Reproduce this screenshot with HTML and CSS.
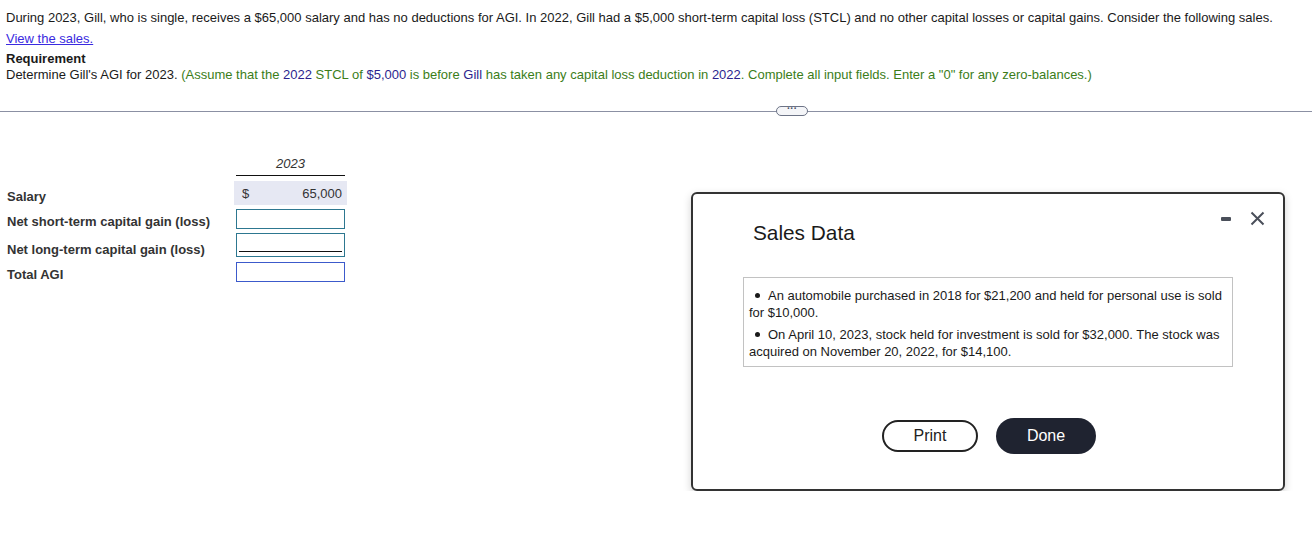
FILE: index.html
```html
<!DOCTYPE html>
<html>
<head>
<meta charset="utf-8">
<link rel="stylesheet" href="styles.css">
</head>
<body>
<div class="question">
  <p class="intro">During 2023, Gill, who is single, receives a $65,000 salary and has no deductions for AGI. In 2022, Gill had a $5,000 short-term capital loss (STCL) and no other capital losses or capital gains. Consider the following sales.</p>
  <p class="link-line"><a class="link" href="#">View the sales.</a></p>
  <p class="req-title">Requirement</p>
  <p class="req">Determine Gill's AGI for 2023. <span class="hint">(Assume that the <span class="num">2022</span> STCL of <span class="num">$5,000</span> is before <span class="num">Gill</span> has taken any capital loss deduction in <span class="num">2022</span>. Complete all input fields. Enter a "0" for any zero-balances.)</span></p>
</div>
<div class="divider">
  <span class="pill">&middot;&middot;&middot;</span>
</div>
<div class="work">
  <div class="table">
    <div class="row head">
      <div class="label"></div>
      <div class="cell year">2023</div>
    </div>
    <div class="row salary">
      <div class="label">Salary</div>
      <div class="cell given"><span>$</span><span>65,000</span></div>
    </div>
    <div class="row r-st">
      <div class="label">Net short-term capital gain (loss)</div>
      <div class="cell"><div class="input teal"></div></div>
    </div>
    <div class="row r-lt">
      <div class="label">Net long-term capital gain (loss)</div>
      <div class="cell"><div class="input teal under"></div></div>
    </div>
    <div class="row r-tot">
      <div class="label">Total AGI</div>
      <div class="cell"><div class="input blue"></div></div>
    </div>
  </div>
  <div class="modal">
    <div class="modal-ctrls">
      <span class="minimize"></span>
      <svg class="close" width="15" height="15" viewBox="0 0 15 15"><path d="M1.5 1.5 L13.5 13.5 M13.5 1.5 L1.5 13.5" stroke="#4a4f5a" stroke-width="2" fill="none"/></svg>
    </div>
    <h2 class="modal-title">Sales Data</h2>
    <div class="sales-box">
      <p class="item">An automobile purchased in 2018 for $21,200 and held for personal use is sold for $10,000.</p>
      <p class="item">On April 10, 2023, stock held for investment is sold for $32,000. The stock was acquired on November 20, 2022, for $14,100.</p>
    </div>
    <div class="buttons">
      <button class="btn print">Print</button>
      <button class="btn done">Done</button>
    </div>
  </div>
</div>
</body>
</html>
```
FILE: styles.css
```css
* { box-sizing: border-box; }
body {
  margin: 0;
  font-family: "Liberation Sans", Arial, sans-serif;
  font-size: 13px;
  color: #1a1a1a;
  background: #fff;
}
p { margin: 0; }
.question {
  padding: 10px 6px 0 6px;
  line-height: 15px;
}
.intro { line-height: 15px; }
.link-line {
  margin-top: 6px;
  line-height: 15px;
}
.link {
  color: #3a2be0;
  text-decoration: underline;
}
.req-title {
  margin-top: 5px;
  font-weight: bold;
  line-height: 15px;
}
.req { line-height: 17px; }
.hint { color: #3b7d19; }
.num { color: #2c1f8e; }

.divider {
  margin-top: 23px;
  height: 11px;
  position: relative;
  display: flex;
  align-items: center;
}
.divider::before {
  content: "";
  flex: 1;
  height: 1px;
  background: #8b90a3;
}
.pill {
  position: absolute;
  left: 776px;
  top: 0;
  width: 32px;
  height: 10px;
  border: 1px solid #6c7386;
  border-radius: 5px;
  background: #f4f5f8;
  color: #4b5164;
  font-size: 10px;
  line-height: 4px;
  text-align: center;
  font-weight: bold;
}

.work {
  display: flex;
  padding: 0 0 0 7px;
}
.table {
  margin-top: 39px;
  width: 684px;
}
.row {
  display: flex;
  align-items: center;
}
.label {
  width: 227px;
  font-weight: bold;
  color: #333;
  line-height: 15px;
}
.cell { width: 113px; }
.head {
  height: 20px;
  align-items: flex-start;
  margin-bottom: 5px;
}
.year {
  margin-left: 2px;
  width: 109px;
  text-align: center;
  font-style: italic;
  color: #333;
  border-bottom: 1px solid #111;
  height: 20px;
  line-height: 15px;
}
.salary { height: 24px; }
.salary .label { padding-top: 6px; }
.given {
  background: #e6e8f3;
  height: 24px;
  display: flex;
  justify-content: space-between;
  align-items: center;
  padding: 0 5px 0 8px;
  color: #333;
}
.r-st { height: 20px; margin-top: 4px; }
.r-st .label { padding-top: 5px; }
.r-lt { height: 24px; margin-top: 4px; }
.r-lt .label { padding-top: 9px; }
.r-tot { height: 20px; margin-top: 5px; }
.r-tot .label { padding-top: 5px; }
.input {
  margin-left: 2px;
  width: 109px;
  height: 20px;
  border: 1px solid #2d7790;
  background: #fff;
}
.input.under {
  height: 24px;
  position: relative;
}
.input.under::after {
  content: "";
  position: absolute;
  left: 2px;
  right: 2px;
  bottom: 4px;
  height: 1px;
  background: #111;
}
.input.blue { border-color: #3c5acb; }

.modal {
  margin-top: 75px;
  width: 594px;
  height: 299px;
  border: 2px solid #333;
  border-radius: 6px;
  box-shadow: 0 3px 8px rgba(0,0,0,0.18);
  position: relative;
  padding: 0 0 0 50px;
}
.modal-ctrls {
  position: absolute;
  right: 18px;
  top: 17px;
  display: flex;
  align-items: center;
  gap: 19px;
}
.minimize {
  width: 10px;
  height: 4px;
  background: #4a4f5a;
  border-radius: 1px;
}
.modal-title {
  margin: 27px 0 0 10px;
  font-weight: normal;
  font-size: 20.8px;
  color: #1a1a1a;
  line-height: 24px;
}
.sales-box {
  margin-top: 32px;
  width: 490px;
  border: 1px solid #c2c2c2;
  padding: 9px 6px 6px 5px;
  line-height: 17px;
  color: #1a1a1a;
}
.item + .item { margin-top: 5px; }
.item::before {
  content: "";
  display: inline-block;
  width: 5px;
  height: 5px;
  border-radius: 50%;
  background: #1a1a1a;
  margin: 0 8px 2px 6px;
  vertical-align: middle;
}
.buttons {
  margin-top: 51px;
  margin-left: 139px;
  display: flex;
  align-items: center;
  gap: 18px;
}
.btn {
  font-family: "Liberation Sans", Arial, sans-serif;
  font-size: 16px;
  border-radius: 17px;
  cursor: pointer;
}
.print {
  width: 96px;
  height: 32px;
  border: 2px solid #222;
  background: #fff;
  color: #222;
}
.done {
  width: 100px;
  height: 36px;
  border: none;
  background: #1f2330;
  color: #fff;
  border-radius: 18px;
}
```
